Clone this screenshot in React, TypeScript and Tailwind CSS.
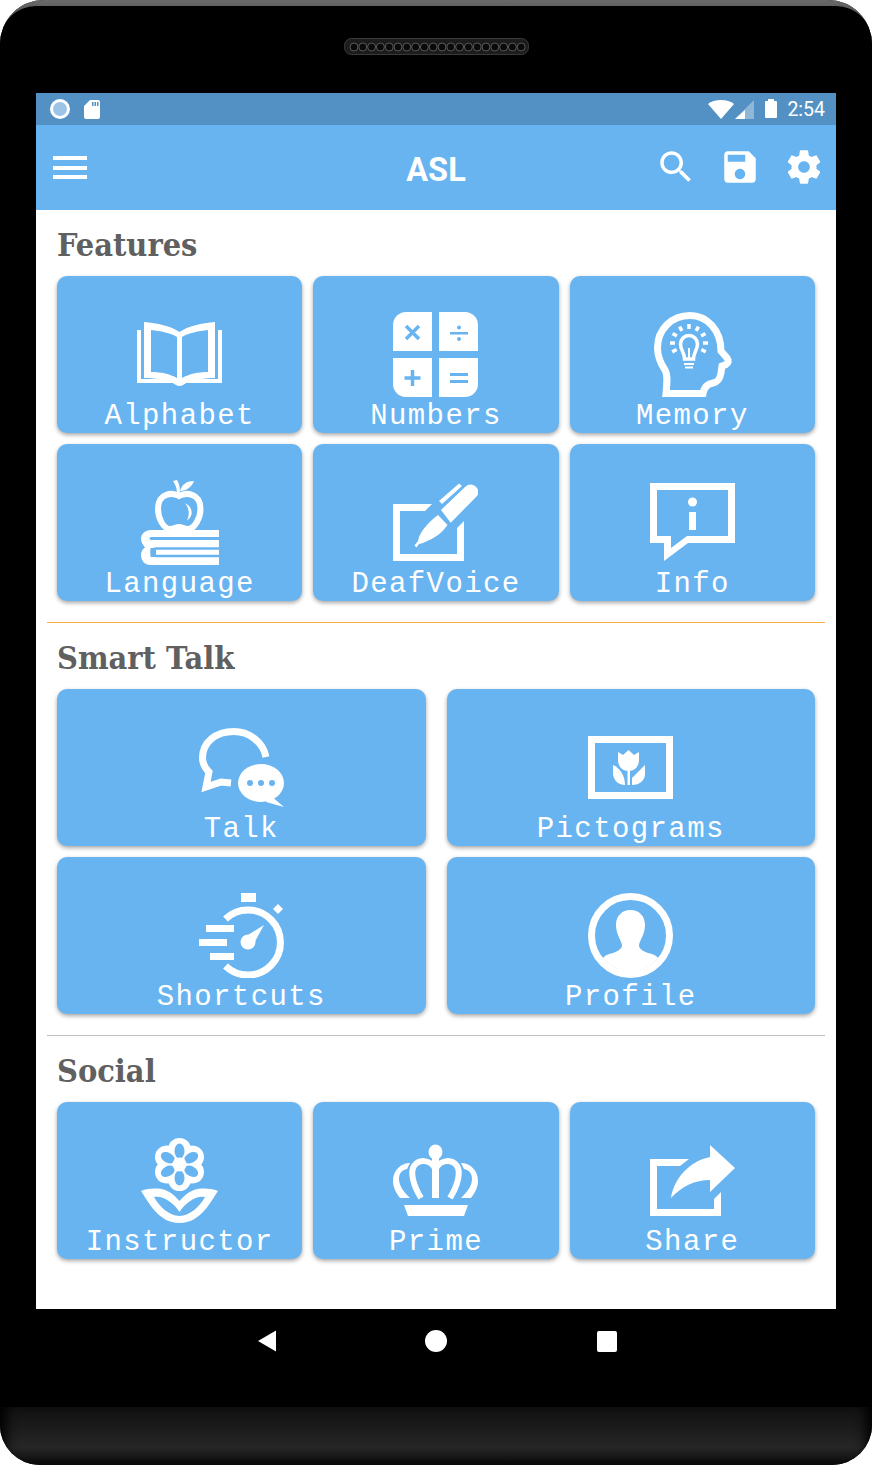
import { ReactNode } from "react";

const BLUE = "#68b4f1";

const Icon = ({ children }: { children: ReactNode }) => (
  <svg width="85" height="85" viewBox="0 0 85 85" fill="#fff" className="block">
    {children}
  </svg>
);

const BookIcon = () => (
  <Icon>
    <g transform="translate(0 10)">
      <path
        fillRule="evenodd"
        d="M7 0C20 1 34 4 42.5 10C51 4 65 1 78 0V56C65 56 53 58 46 63Q42.5 65 39 63C32 58 20 56 7 56ZM14 8V50C24 50 33 52 40 56V15C33 11 24 9 14 8ZM71 8V50C61 50 52 52 45 56V15C52 11 61 9 71 8Z"
      />
      <path d="M0 8H4V57H30L36 61H0ZM85 8H81V57H55L49 61H85Z" />
    </g>
  </Icon>
);

const CalcIcon = () => (
  <Icon>
    <path d="M13 0H39V39H0V13A13 13 0 0 1 13 0Z" />
    <path d="M46 0H72A13 13 0 0 1 85 13V39H46Z" />
    <path d="M0 46H39V85H13A13 13 0 0 1 0 72Z" />
    <path d="M46 46H85V72A13 13 0 0 1 72 85H46Z" />
    <g stroke={BLUE} strokeWidth="3.5" fill="none">
      <path d="M13 14L26 27M26 14L13 27" />
      <path d="M19.5 58V74M11.5 66H27.5" />
    </g>
    <path fill={BLUE} d="M57 20H75V22.5H57ZM57 61H75V64H57ZM57 68H75V71H57Z" />
    <circle cx="66" cy="15.5" r="2" fill={BLUE} />
    <circle cx="66" cy="27" r="2" fill={BLUE} />
  </Icon>
);

const HeadIcon = () => (
  <Icon>
    <g transform="translate(4 0)">
      <path
        fill="none"
        stroke="#fff"
        strokeWidth="7"
        d="M12 81.5H49C50 75 53 72 59 71C64 70 66 67 67 61L68 54L72 52.5C74.5 51 75 48.5 73 46L67 39C67 18 53 3.5 36 3.5C18 3.5 3.5 17 3.5 36C3.5 46 7 52 11 58C14 63 13 72 12 81.5Z"
      />
      <path
        fill="none"
        stroke="#fff"
        strokeWidth="3.5"
        d="M30.5 47C30.5 40 26.5 38 26.5 32A8.5 8.5 0 0 1 43.5 32C43.5 38 39.5 40 39.5 47Z"
      />
      <path fill="none" stroke="#fff" strokeWidth="2" d="M35 36V47M30 52H40M31 55.5H39" />
      {[0, 30, 60, 90, 118, -30, -60, -90, -118].map((a) => (
        <line
          key={a}
          x1="35"
          y1="12"
          x2="35"
          y2="17"
          stroke="#fff"
          strokeWidth="3.5"
          transform={`rotate(${a} 35 31)`}
        />
      ))}
    </g>
  </Icon>
);

const AppleIcon = () => (
  <Icon>
    <g transform="translate(4 0)">
      <path
        fill="none"
        stroke="#fff"
        strokeWidth="6"
        d="M38 16C32 12.5 17 12 17 29C17 38 22.5 49 29 49C33 49 35 47 38 47C41 47 43 49 47 49C53.5 49 59.5 38 59.5 29C59.5 12 44 12.5 38 16Z"
      />
      <path d="M44 23C52 27 53 36 46 40.5C49 34 48 28 44 23Z" />
      <path d="M39 11C41 4 46 1 53 1C51 7 45 11 39 11Z" />
      <path d="M32 1L36 0C38 3 39 7 39 13H36C36 8 34 4 32 1Z" />
      <path d="M10 50H78V57H10C8 57 8 60 10 60H78V85H10C3 85 0 80 0 75C0 71 2 69 4 67.5C2 65 0 62 0 59C0 54 4 50 10 50Z" />
      <path
        fill="none"
        stroke={BLUE}
        strokeWidth="2.5"
        d="M78 68.5H15C9 68.5 9 76 15 76H78"
      />
      <path fill={BLUE} d="M9.5 68H15V77H9.5Z" />
    </g>
  </Icon>
);

const PencilIcon = () => (
  <Icon>
    <g transform="translate(0 3)">
      <path d="M0 21H39L32 28H7V71H64V45L71 38V78H0Z" />
      <path d="M48 27L72 4C76 0 81 1 84 5C86 8 86 11 84 13L57.7 39.7Z" />
      <path d="M46 18L66 0.5L69 3L49 21Z" />
      <path d="M45 32L54.5 42C49 50 42 55 30 60L26 61L23.5 64.5L21.5 62.5L25 58L26 54C30 45 37 38 45 32Z" />
    </g>
  </Icon>
);

const InfoIcon = () => (
  <Icon>
    <g transform="translate(0 3)">
      <path
        fillRule="evenodd"
        d="M0 0H85V60H38L14 78V60H0ZM7 7V53H21V65L37 53H78V7Z"
      />
      <circle cx="42.5" cy="19" r="4.5" />
      <rect x="39" y="29" width="7" height="18" />
    </g>
  </Icon>
);

const TalkIcon = () => (
  <Icon>
    <g transform="translate(0 3)">
      <path
        fill="none"
        stroke="#fff"
        strokeWidth="7"
        d="M67 29C64 14 50 3.5 35 3.5C17 3.5 3.5 14 3.5 30C3.5 36 6 40 10 44L7 59L22 54L32 55"
      />
      <ellipse cx="62" cy="55" rx="23" ry="19" />
      <path d="M72 68L85 79L67 74Z" />
      <circle cx="51" cy="55" r="3" fill={BLUE} />
      <circle cx="62" cy="55" r="3" fill={BLUE} />
      <circle cx="73" cy="55" r="3" fill={BLUE} />
    </g>
  </Icon>
);

const TulipIcon = () => (
  <Icon>
    <g transform="translate(0 11)">
      <rect x="3.5" y="3.5" width="78" height="56" fill="none" stroke="#fff" strokeWidth="7" />
      <path d="M30 16L35 19L40.5 14L46 19L51 16V24C51 31 46 35 40.5 35C35 35 30 31 30 24Z" />
      <path d="M25 29C32 32 37 40 37 49C30 49 25 44 25 37Z" />
      <rect x="39.5" y="35" width="2.5" height="14" />
      <path d="M44 49V42L57 29V38C57 44 52 49 44 49Z" />
    </g>
  </Icon>
);

const TimerIcon = () => (
  <Icon>
    <rect x="42" y="0" width="15" height="9" />
    <path d="M79 11L84 16L79 21L74 16Z" />
    <path
      fill="none"
      stroke="#fff"
      strokeWidth="7"
      d="M26.5 26A32.5 32.5 0 1 1 26.5 73"
    />
    <rect x="7" y="32" width="28" height="7" />
    <rect x="0" y="46" width="28" height="7" />
    <rect x="11" y="60" width="24" height="7" />
    <circle cx="49" cy="49" r="7.5" />
    <path d="M45 44.5L65 32L53.5 53Z" />
  </Icon>
);

const ProfileIcon = () => (
  <Icon>
    <circle cx="42.5" cy="42.5" r="39" fill="none" stroke="#fff" strokeWidth="7" />
    <path d="M42.5 17C51 17 57 23 57 32C57 41 52 47 51 52C51 56 55 58 60 60C64 61 68 62 70 65A35 35 0 0 1 15 65C17 62 21 61 25 60C30 58 34 56 34 52C33 47 28 41 28 32C28 23 34 17 42.5 17Z" />
  </Icon>
);

const FlowerIcon = () => {
  const angles = [0, 60, 120, 180, 240, 300];
  return (
    <Icon>
      <g transform="translate(4 0)">
        {angles.map((a) => (
          <circle key={a} cx="38.5" cy="11.5" r="11.5" transform={`rotate(${a} 38.5 26.5)`} />
        ))}
        <circle cx="38.5" cy="26.5" r="16" />
        {angles.map((a) => (
          <ellipse
            key={a}
            cx="38.5"
            cy="13"
            rx="5"
            ry="7.5"
            fill={BLUE}
            transform={`rotate(${a} 38.5 26.5)`}
          />
        ))}
        <circle cx="38.5" cy="26.5" r="7" />
        <path
          fillRule="evenodd"
          d="M0 53C8 50 18 50 24 52C30 54 35 59 38.5 63C42 59 47 54 53 52C59 50 69 50 77 53C70 63 60 85 38.5 85C17 85 7 63 0 53ZM13 59C18 68 28 78 38.5 78C49 78 59 68 64 59C55 57 44 65 38.5 74C33 65 22 57 13 59Z"
        />
      </g>
    </Icon>
  );
};

const CrownIcon = () => (
  <Icon>
    <g transform="translate(0 7)">
      <ellipse cx="42.5" cy="7" rx="7" ry="7.5" />
      <rect x="39" y="13" width="7" height="40" />
      <g fill="none" stroke="#fff" strokeWidth="6">
        <path d="M28 53C20 40 17 27 21 21C26 14 37 14 42.5 24" />
        <path d="M57 53C65 40 68 27 64 21C59 14 48 14 42.5 24" />
      </g>
      <path d="M17 18C8 18 0 25 0 36C0 42 3 48 7 53H17C11 47 6 41 6 34C6 28 9 25 14 24Z" />
      <path d="M68 18C77 18 85 25 85 36C85 42 82 48 78 53H68C74 47 79 41 79 34C79 28 76 25 71 24Z" />
      <path d="M11 60H75L71 71H15Z" />
    </g>
  </Icon>
);

const ShareIcon = () => (
  <Icon>
    <g transform="translate(0 7)">
      <path d="M0 14H39L30 21H7V64H64V54L71 47V71H0Z" />
      <path d="M60 0L85 23L60 47V35C45 35 32 41 21 53C24 33 40 16 60 12Z" />
    </g>
  </Icon>
);

const Tile = ({ icon, label }: { icon: ReactNode; label: string }) => (
  <div className="h-[157px] rounded-[10px] bg-[#68b4f1] shadow-[0_2px_4px_rgba(0,0,0,0.35)] flex flex-col items-center pt-[36px]">
    <div className="h-[85px]">{icon}</div>
    <span className="mt-[2px] font-['Liberation_Mono',monospace] text-[29px] tracking-[1.4px] leading-[36px] text-white whitespace-nowrap">
      {label}
    </span>
  </div>
);

const SectionTitle = ({ children }: { children: string }) => (
  <h2 className="h-[66px] pt-[4px] flex items-center font-['DejaVu_Serif_Condensed','DejaVu_Serif',serif] font-bold text-[32.2px] text-[#606060]">
    {children}
  </h2>
);

const StatusBar = () => (
  <div className="h-[32px] bg-[#5391c4] flex items-center pl-[14px] pr-[11px] text-white">
    <div className="w-[20px] h-[20px] rounded-full border-[3px] border-white bg-[#9cc4e6]" />
    <svg width="16" height="19" viewBox="0 0 16 19" fill="#fff" className="ml-[14px]">
      <path d="M6 0H14Q16 0 16 2V17Q16 19 14 19H2Q0 19 0 17V6ZM8 2V6H9.5V2ZM10.5 2V6H12V2ZM13 2V6H14.5V2Z" fillRule="evenodd" />
    </svg>
    <div className="flex-1" />
    <svg width="26" height="19" viewBox="0 0 26 19" fill="#fff">
      <path d="M13 19L0 4C3 1.5 8 0 13 0C18 0 23 1.5 26 4Z" />
    </svg>
    <svg width="19" height="19" viewBox="0 0 19 19" className="ml-[1px]">
      <path d="M19 0V19H0Z" fill="#fff" fillOpacity="0.35" />
      <path d="M10 10V19H0Z" fill="#fff" />
    </svg>
    <div className="ml-[11px] w-[12px] h-[17px] bg-white rounded-[1px] relative">
      <div className="absolute -top-[2px] left-[3px] w-[6px] h-[2px] bg-white" />
    </div>
    <span className="ml-[10px] pt-[2px] font-['Roboto',sans-serif] text-[19.5px] leading-none">2:54</span>
  </div>
);

const AppBar = () => (
  <div className="h-[85px] bg-[#68b4f1] flex items-center pl-[17px] pr-[11px] relative text-white">
    <div className="flex flex-col gap-[5.5px] w-[34px]">
      <div className="h-[4px] bg-white" />
      <div className="h-[4px] bg-white" />
      <div className="h-[4px] bg-white" />
    </div>
    <span className="absolute left-0 right-0 top-[27px] text-center font-['Roboto',sans-serif] font-bold text-[32.5px] leading-[36px]">
      ASL
    </span>
    <div className="ml-auto flex items-center gap-[22px] -mt-[2px]">
      <svg width="42" height="42" viewBox="0 0 24 24" fill="#fff">
        <path d="M15.5 14h-.79l-.28-.27C15.41 12.59 16 11.11 16 9.5 16 5.91 13.09 3 9.5 3S3 5.91 3 9.5 5.91 16 9.5 16c1.61 0 3.09-.59 4.23-1.57l.27.28v.79l5 4.99L20.49 19l-4.99-5zm-6 0C7.01 14 5 11.99 5 9.5S7.01 5 9.5 5 14 7.01 14 9.5 11.99 14 9.5 14z" />
      </svg>
      <svg width="42" height="42" viewBox="0 0 24 24" fill="#fff">
        <path d="M17 3H5c-1.11 0-2 .9-2 2v14c0 1.1.89 2 2 2h14c1.1 0 2-.9 2-2V7l-4-4zm-5 16c-1.66 0-3-1.34-3-3s1.34-3 3-3 3 1.34 3 3-1.34 3-3 3zm3-10H5V5h10v4z" />
      </svg>
      <svg width="40" height="40" viewBox="0 0 24 24" fill="#fff" className="mx-[1px]">
        <path d="M19.43 12.98c.04-.32.07-.64.07-.98s-.03-.66-.07-.98l2.11-1.65c.19-.15.24-.42.12-.64l-2-3.46c-.12-.22-.39-.3-.61-.22l-2.49 1c-.52-.4-1.08-.73-1.69-.98l-.38-2.65C14.46 2.18 14.25 2 14 2h-4c-.25 0-.46.18-.49.42l-.38 2.65c-.61.25-1.17.59-1.69.98l-2.49-1c-.23-.09-.49 0-.61.22l-2 3.46c-.13.22-.07.49.12.64l2.11 1.65c-.04.32-.07.65-.07.98s.03.66.07.98l-2.11 1.65c-.19.15-.24.42-.12.64l2 3.46c.12.22.39.3.61.22l2.49-1c.52.4 1.08.73 1.69.98l.38 2.65c.03.24.24.42.49.42h4c.25 0 .46-.18.49-.42l.38-2.65c.61-.25 1.17-.59 1.69-.98l2.49 1c.23.09.49 0 .61-.22l2-3.46c.12-.22.07-.49-.12-.64l-2.11-1.65zM12 15.5c-1.93 0-3.5-1.57-3.5-3.5s1.57-3.5 3.5-3.5 3.5 1.57 3.5 3.5-1.57 3.5-3.5 3.5z" />
      </svg>
    </div>
  </div>
);

const Speaker = () => (
  <svg width="185" height="17" viewBox="0 0 185 17">
    <rect x="0.5" y="0.5" width="184" height="16" rx="7" fill="#1c1c1c" stroke="#3a3a3a" />
    {Array.from({ length: 20 }).map((_, i) => (
      <circle key={i} cx={10 + i * 8.8} cy="9" r="4" fill="#0a0a0a" stroke="#585858" strokeWidth="1" />
    ))}
  </svg>
);

const App = () => {
  return (
    <div className="w-[872px] h-[1465px] rounded-t-[44px] rounded-b-[40px] overflow-hidden bg-black flex flex-col">
      <div className="h-[93px] shrink-0 bg-gradient-to-b from-[#6a6a6a] to-[#333] to-[40%] pt-[6px]">
        <div className="h-full rounded-t-[36px] bg-black flex justify-center pt-[32px]">
          <Speaker />
        </div>
      </div>

      <div className="mx-[36px] w-[800px] h-[1216px] shrink-0 bg-white flex flex-col">
        <StatusBar />
        <AppBar />
        <div className="flex flex-col">
          <section className="px-[21px] pb-[21px]">
            <SectionTitle>Features</SectionTitle>
            <div className="grid grid-cols-3 gap-[11px]">
              <Tile icon={<BookIcon />} label="Alphabet" />
              <Tile icon={<CalcIcon />} label="Numbers" />
              <Tile icon={<HeadIcon />} label="Memory" />
              <Tile icon={<AppleIcon />} label="Language" />
              <Tile icon={<PencilIcon />} label="DeafVoice" />
              <Tile icon={<InfoIcon />} label="Info" />
            </div>
          </section>
          <div className="mx-[11px] h-px bg-[#f5b041]" />
          <section className="px-[21px] pb-[21px]">
            <SectionTitle>Smart Talk</SectionTitle>
            <div className="grid grid-cols-2 gap-x-[21px] gap-y-[11px]">
              <Tile icon={<TalkIcon />} label="Talk" />
              <Tile icon={<TulipIcon />} label="Pictograms" />
              <Tile icon={<TimerIcon />} label="Shortcuts" />
              <Tile icon={<ProfileIcon />} label="Profile" />
            </div>
          </section>
          <div className="mx-[11px] h-px bg-[#bdbdbd]" />
          <section className="px-[21px]">
            <SectionTitle>Social</SectionTitle>
            <div className="grid grid-cols-3 gap-[11px]">
              <Tile icon={<FlowerIcon />} label="Instructor" />
              <Tile icon={<CrownIcon />} label="Prime" />
              <Tile icon={<ShareIcon />} label="Share" />
            </div>
          </section>
        </div>
      </div>

      <div className="h-[98px] shrink-0 flex items-center pb-[34px] text-white">
        <div className="w-[872px] flex items-center justify-center pl-[2px]">
          <svg width="20" height="22" viewBox="0 0 20 22" fill="#fff">
            <path d="M19 0.5V21.5L1 11Z" />
          </svg>
          <div className="ml-[148px] w-[22px] h-[22px] rounded-full bg-white" />
          <div className="ml-[150px] w-[20px] h-[21px] rounded-[2px] bg-white" />
        </div>
      </div>
      <div className="h-[58px] shrink-0 bg-gradient-to-b from-[#111] via-[#262626] via-70% to-[#0a0a0a] shadow-[inset_14px_0_12px_-8px_#000,inset_-14px_0_12px_-8px_#000]" />
    </div>
  );
};

export default App;
